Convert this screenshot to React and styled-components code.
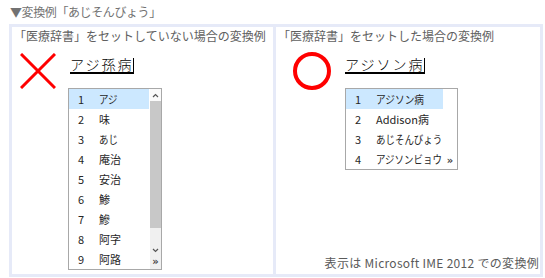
import React from "react";
import styled, { createGlobalStyle } from "styled-components";

const GlobalStyle = createGlobalStyle`
  html, body {
    margin: 0;
    padding: 0;
    background: #fff;
  }
  body {
    font-family: "Noto Sans CJK JP", "Noto Sans", sans-serif;
  }
`;

const Page = styled.div`
  width: 545px;
  height: 278px;
  overflow: hidden;
`;

const Title = styled.div`
  box-sizing: border-box;
  height: 20px;
  padding: 4px 0 0 10px;
  font-size: 12px;
  line-height: 16px;
  letter-spacing: -0.4px;
  color: #727272;
`;

const Frame = styled.div`
  box-sizing: border-box;
  margin: 4px 0 0 9px;
  width: 534px;
  height: 253px;
  padding: 3px;
  display: grid;
  grid-template-columns: 261px 264px;
  gap: 3px;
  background: #e6eaf8;
`;

const Cell = styled.div`
  background: #fff;
  display: flex;
  flex-direction: column;
  min-height: 0;
`;

const Heading = styled.div`
  padding: 1px 0 0 2px;
  font-size: 12px;
  line-height: 16px;
  color: #606060;
  white-space: nowrap;
`;

const Example = styled.div`
  display: flex;
  align-items: flex-start;
  padding-left: ${({ $indent }) => $indent}px;
  gap: ${({ $gap }) => $gap}px;
`;

const Mark = styled.svg`
  flex: none;
  margin-top: ${({ $top }) => $top}px;
`;

const Composer = styled.div`
  display: flex;
  flex-direction: column;
  margin-top: 11px;
`;

const InputLine = styled.div`
  display: flex;
  align-items: flex-start;
`;

const Typed = styled.span`
  display: block;
  height: 17px;
  border-bottom: 2px solid #000;
  font-size: 14px;
  font-weight: 300;
  line-height: 18px;
  letter-spacing: 2px;
  color: #000;
  white-space: nowrap;
`;

const Caret = styled.span`
  display: block;
  width: 1px;
  height: 16px;
  margin-top: 3px;
  background: #000;
`;

const CandidateBox = styled.div`
  box-sizing: border-box;
  display: flex;
  width: ${({ $width }) => $width}px;
  margin: 14px 0 0 ${({ $shift }) => $shift}px;
  border: 1px solid #a8a8a8;
  background: #fff;
`;

const Rows = styled.div`
  width: ${({ $width }) => $width}px;
  flex: none;
`;

const Row = styled.div`
  display: grid;
  grid-template-columns: 21px 1fr;
  height: 20px;
  padding-left: 9px;
  font-size: 11px;
  line-height: 20px;
  color: #262626;
  white-space: nowrap;
  background: ${({ $active }) => ($active ? "#cce8ff" : "transparent")};
`;

const Word = styled.span`
  display: inline-block;
  transform: scaleX(${({ $squeeze }) => $squeeze});
  transform-origin: left center;
`;

const Scrollbar = styled.div`
  flex: 1;
  display: flex;
  flex-direction: column;
  margin-left: 1px;
  background: #f0f0f0;
`;

const ArrowCap = styled.div`
  height: 12px;
  display: flex;
  justify-content: center;
  align-items: center;
  background: #fafafa;
`;

const Thumb = styled.div`
  height: 127px;
  background: #c8c8c8;
`;

const Track = styled.div`
  flex: 1;
  display: flex;
  flex-direction: column;
  align-items: center;
  justify-content: flex-end;
  padding-bottom: 2px;
`;

const SideColumn = styled.div`
  flex: 1;
  display: flex;
  align-items: flex-end;
  justify-content: center;
  padding-bottom: 3px;
`;

const More = styled.span`
  margin-top: ${({ $gap }) => $gap || 0}px;
  font-family: "DejaVu Sans", sans-serif;
  font-size: 10px;
  line-height: 10px;
  font-weight: bold;
  color: #444;
`;

const Footer = styled.div`
  margin-top: auto;
  padding: 0 1px 3px 0;
  text-align: right;
  font-size: 12px;
  line-height: 16px;
  letter-spacing: 0.3px;
  color: #5a5a5a;
  white-space: nowrap;
`;

const Chevron = ({ down }) => (
  <svg width="7" height="5" viewBox="0 0 7 5">
    <path
      d={down ? "M1 1 L3.5 3.5 L6 1" : "M1 4 L3.5 1.5 L6 4"}
      fill="none"
      stroke="#555"
      strokeWidth="1.2"
    />
  </svg>
);

const CrossMark = () => (
  <Mark $top={9} width="36" height="36" viewBox="0 0 36 36">
    <path d="M1 1 L35 35 M35 1 L1 35" stroke="#ff0000" strokeWidth="3" />
  </Mark>
);

const CircleMark = () => (
  <Mark $top={7} width="40" height="40" viewBox="0 0 40 40">
    <circle cx="20" cy="20" r="17" fill="none" stroke="#ff0000" strokeWidth="4" />
  </Mark>
);

const withoutDict = [
  ["アジ", 0.86],
  ["味", 1],
  ["あじ", 0.86],
  ["庵治", 1],
  ["安治", 1],
  ["鯵", 1],
  ["鰺", 1],
  ["阿字", 1],
  ["阿路", 1],
];
const withDict = [
  ["アジソン病", 0.88],
  ["Addison病", 1],
  ["あじそんびょう", 0.86],
  ["アジソンビョウ", 0.86],
];

const CandidateRows = ({ items }) =>
  items.map(([word, squeeze], i) => (
    <Row key={word} $active={i === 0}>
      <span>{i + 1}</span>
      <span>
        <Word $squeeze={squeeze}>{word}</Word>
      </span>
    </Row>
  ));

export default function App() {
  return (
    <Page>
      <GlobalStyle />
      <Title>▼変換例「あじそんびょう」</Title>
      <Frame>
        <Cell>
          <Heading>「医療辞書」をセットしていない場合の変換例</Heading>
          <Example $indent={8} $gap={14}>
            <CrossMark />
            <Composer>
              <InputLine>
                <Typed>アジ孫病</Typed>
                <Caret />
              </InputLine>
              <CandidateBox $width={94} $shift={-2}>
                <Rows $width={80}>
                  <CandidateRows items={withoutDict} />
                </Rows>
                <Scrollbar>
                  <ArrowCap>
                    <Chevron />
                  </ArrowCap>
                  <Thumb />
                  <Track>
                    <Chevron down />
                    <More $gap={4}>»</More>
                  </Track>
                </Scrollbar>
              </CandidateBox>
            </Composer>
          </Example>
        </Cell>
        <Cell>
          <Heading>「医療辞書」をセットした場合の変換例</Heading>
          <Example $indent={16} $gap={13}>
            <CircleMark />
            <Composer>
              <InputLine>
                <Typed>アジソン病</Typed>
                <Caret />
              </InputLine>
              <CandidateBox $width={113} $shift={0}>
                <Rows $width={97}>
                  <CandidateRows items={withDict} />
                </Rows>
                <SideColumn>
                  <More>»</More>
                </SideColumn>
              </CandidateBox>
            </Composer>
          </Example>
          <Footer>表示は Microsoft IME 2012 での変換例</Footer>
        </Cell>
      </Frame>
    </Page>
  );
}
